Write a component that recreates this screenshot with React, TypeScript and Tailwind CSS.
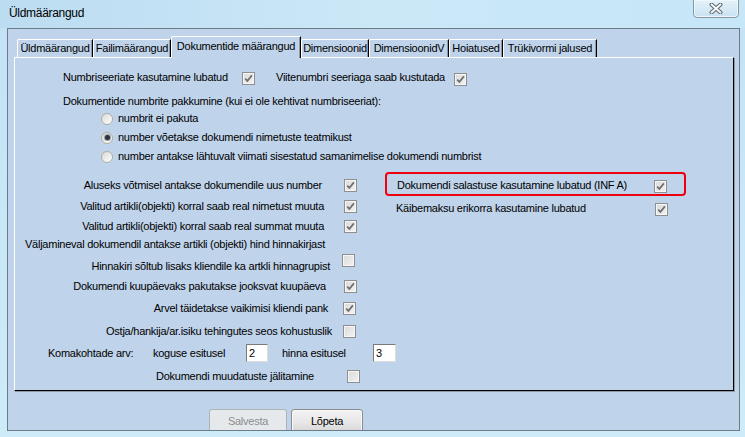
import React from "react";

const Check = ({ checked = false, className = "" }: { checked?: boolean; className?: string }) => (
  <span
    className={`inline-flex h-[13px] w-[13px] shrink-0 items-center justify-center border border-[#8f8f8f] bg-gradient-to-br from-[#dadada] to-[#f3f3f3] shadow-[inset_1px_1px_0_#f6f6f6,inset_-1px_-1px_0_#f6f6f6] ${className}`}
  >
    {checked && (
      <svg width="9" height="9" viewBox="0 0 9 9">
        <path d="M1.2 4.6 L3.4 6.9 L7.9 1.4" stroke="#6f6f6f" strokeWidth="1.7" fill="none" />
      </svg>
    )}
  </span>
);

const Radio = ({ checked = false }: { checked?: boolean }) => (
  <span className="ml-[86px] inline-flex h-[12px] w-[12px] shrink-0 items-center justify-center rounded-full border border-[#b3ad9f] bg-gradient-to-br from-[#d9d9d9] to-[#ffffff]">
    {checked && <span className="h-[5px] w-[5px] rounded-full bg-[#2f3338] shadow-[0_0_0_1px_#8fa3b8]" />}
  </span>
);

const Tab = ({ label, w, active = false }: { label: string; w: string; active?: boolean }) =>
  active ? (
    <div
      className={`relative z-10 -mb-px flex h-[22px] items-center justify-center rounded-tl-[2px] border-l border-r border-t border-l-white border-r-black border-t-white bg-[#bfd3ea] pb-[2px] shadow-[inset_-1px_0_0_#8d99a6] ${w}`}
    >
      {label}
    </div>
  ) : (
    <div
      className={`flex h-[18px] items-center justify-center rounded-tl-[2px] border-l border-r border-t border-l-white border-r-black border-t-white shadow-[inset_-1px_0_0_#8d99a6] ${w}`}
    >
      {label}
    </div>
  );

const Row = ({ h, children }: { h: string; children: React.ReactNode }) => (
  <div className={`flex items-start ${h}`}>
    <div className="flex h-[20px] items-center">{children}</div>
  </div>
);

export default function App() {
  return (
    <div className="relative h-[437px] w-[745px] overflow-hidden bg-gradient-to-b from-[#c3e2f4] to-[#cdebf9] font-['Liberation_Sans',Arial,sans-serif] text-[11px] leading-[13px] tracking-[-0.25px] text-black">
      {/* title bar */}
      <div className="flex h-[28px] items-start justify-between bg-gradient-to-r from-[#bcdcf1] via-[#cbe8f7] to-[#c6e7f8]">
        <div className="pl-[9px] pt-[7px] text-[12px] tracking-[-0.3px]">Üldmäärangud</div>
        <div className="mr-[6px] -mt-px flex h-[19px] w-[46px] items-center justify-center rounded-b-[4px] border border-[#8797a6] bg-gradient-to-b from-[#e4f1f9] to-[#c9e2f1] shadow-[inset_0_0_0_1px_#eef7fc]">
          <svg width="14" height="11" viewBox="0 0 14 11">
            <path d="M2.5 1.5 L11.5 9.5 M11.5 1.5 L2.5 9.5" stroke="#5f6770" strokeWidth="4" strokeLinecap="round" fill="none" />
            <path d="M2.5 1.5 L11.5 9.5 M11.5 1.5 L2.5 9.5" stroke="#f4f6f8" strokeWidth="2" strokeLinecap="round" fill="none" />
          </svg>
        </div>
      </div>

      {/* client area */}
      <div className="ml-[7px] h-[403px] w-[733px] overflow-hidden border border-[#6e7c8a] bg-[#bfd3ea]">
        <div className="pt-[7px]">
          {/* tabs */}
          <div className="ml-[9px] flex h-[21px] items-end">
            <Tab label="Üldmäärangud" w="w-[76px]" />
            <Tab label="Failimäärangud" w="w-[78px]" />
            <Tab label="Dokumentide määrangud" w="w-[130px]" active />
            <Tab label="Dimensioonid" w="w-[68px]" />
            <Tab label="DimensioonidV" w="w-[80px]" />
            <Tab label="Hoiatused" w="w-[54px]" />
            <Tab label="Trükivormi jalused" w="w-[94px]" />
          </div>

          {/* panel */}
          <div className="ml-[6px] h-[334px] w-[720px] border border-b-black border-l-white border-r-black border-t-white shadow-[1px_1px_0_#8d99a6]">
            <div className="flex flex-col pt-[10px]">
              {/* top row */}
              <div className="flex h-[20px] items-start">
                <span className="ml-[48px] mt-[3px] w-[179px]">Numbriseeriate kasutamine lubatud</span>
                <Check checked className="mt-[4px]" />
                <span className="ml-[21px] mt-[3px] w-[178px]">Viitenumbri seeriaga saab kustutada</span>
                <Check checked className="mt-[5px]" />
              </div>
              <div className="mt-[6px] flex h-[15px] items-center">
                <span className="ml-[48px]">Dokumentide numbrite pakkumine (kui ei ole kehtivat numbriseeriat):</span>
              </div>
              <div className="flex h-[19px] items-center">
                <Radio />
                <span className="ml-[5px]">numbrit ei pakuta</span>
              </div>
              <div className="flex h-[19px] items-center">
                <Radio checked />
                <span className="ml-[5px]">number võetakse dokumendi nimetuste teatmikust</span>
              </div>
              <div className="flex h-[19px] items-center">
                <Radio />
                <span className="ml-[5px]">number antakse lähtuvalt viimati sisestatud samanimelise dokumendi numbrist</span>
              </div>

              {/* lower section */}
              <div className="flex">
                <div className="flex w-[370px] flex-col pt-[9px]">
                  <Row h="h-[21px]">
                    <span className="w-[307px] text-right">Aluseks võtmisel antakse dokumendile uus number</span>
                    <Check checked className="ml-[22px]" />
                  </Row>
                  <Row h="h-[20px]">
                    <span className="w-[309px] text-right">Valitud artikli(objekti) korral saab real nimetust muuta</span>
                    <Check checked className="ml-[20px]" />
                  </Row>
                  <Row h="h-[18px]">
                    <span className="w-[309px] text-right">Valitud artikli(objekti) korral saab real summat muuta</span>
                    <Check checked className="ml-[20px]" />
                  </Row>
                  <Row h="h-[18px]">
                    <span className="w-[310px] whitespace-nowrap text-right">
                      Väljamineval dokumendil antakse artikli (objekti) hind hinnakirjast
                    </span>
                  </Row>
                  <div className="flex h-[24px] items-start">
                    <span className="mt-[8px] w-[315px] text-right">Hinnakiri sõltub lisaks kliendile ka artkli hinnagrupist</span>
                    <Check className="ml-[12px] mt-[2px]" />
                  </div>
                  <Row h="h-[22px]">
                    <span className="w-[311px] text-right">Dokumendi kuupäevaks pakutakse jooksvat kuupäeva</span>
                    <Check checked className="ml-[18px]" />
                  </Row>
                  <Row h="h-[23px]">
                    <span className="w-[313px] text-right">Arvel täidetakse vaikimisi kliendi pank</span>
                    <Check checked className="ml-[15px]" />
                  </Row>
                  <Row h="h-[22px]">
                    <span className="w-[317px] text-right">Ostja/hankija/ar.isiku tehingutes seos kohustuslik</span>
                    <Check className="ml-[11px]" />
                  </Row>
                  <Row h="h-[23px]">
                    <span className="ml-[33px] w-[105px]">Komakohtade arv:</span>
                    <span className="w-[93px]">koguse esitusel</span>
                    <span className="flex h-[18px] w-[22px] items-center border border-b-[#dcdcdc] border-l-[#7a7a7a] border-r-[#dcdcdc] border-t-[#7a7a7a] bg-white pl-[2px]">
                      2
                    </span>
                    <span className="ml-[14px] w-[91px]">hinna esitusel</span>
                    <span className="flex h-[18px] w-[23px] items-center border border-b-[#dcdcdc] border-l-[#7a7a7a] border-r-[#dcdcdc] border-t-[#7a7a7a] bg-white pl-[2px]">
                      3
                    </span>
                  </Row>
                  <Row h="h-[20px]">
                    <span className="ml-[141px] w-[191px]">Dokumendi muudatuste jälitamine</span>
                    <Check />
                  </Row>
                </div>

                <div className="flex flex-col pt-[6px]">
                  <div className="flex h-[24px] w-[301px] items-start rounded-[4px] border-[2.5px] border-[#f0000f] pl-[10px] pt-[5px]">
                    <span className="w-[257px]">Dokumendi salastuse kasutamine lubatud (INF A)</span>
                    <Check checked className="mt-px" />
                  </div>
                  <div className="mt-[2px] flex h-[20px] items-center pl-[11px]">
                    <span className="w-[259px]">Käibemaksu erikorra kasutamine lubatud</span>
                    <Check checked className="mt-[3px]" />
                  </div>
                </div>
              </div>
            </div>
          </div>

          {/* buttons */}
          <div className="ml-[201px] mt-[18px] flex">
            <div className="flex h-[26px] w-[78px] items-start justify-center rounded-[3px] border border-[#adb2b5] bg-[#e6e9ec] pt-[5px] text-[#8c8c8c]">
              Salvesta
            </div>
            <div className="ml-[4px] flex h-[26px] w-[72px] items-start justify-center rounded-[3px] border border-[#8b8d8f] bg-gradient-to-b from-[#f2f2f2] via-[#e8e8e8] to-[#d2d2d2] pt-[5px] shadow-[inset_0_0_0_1px_#f8f8f8]">
              Lõpeta
            </div>
          </div>
        </div>
      </div>
    </div>
  );
}
